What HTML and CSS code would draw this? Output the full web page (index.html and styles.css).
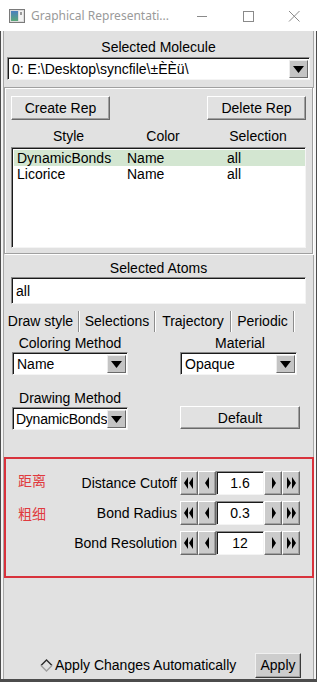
FILE: index.html
```html
<!DOCTYPE html>
<html lang="en">
<head>
    <meta charset="UTF-8">
    <title>Graphical Representations</title>
    <link rel="stylesheet" href="styles.css">
</head>
<body>
<div class="window">
    <div class="titlebar">
        <svg class="app-icon" width="16" height="14" viewBox="0 0 16 14">
            <defs>
                <linearGradient id="ig" x1="0" y1="0" x2="0" y2="1">
                    <stop offset="0" stop-color="#4a7fc0"/>
                    <stop offset="1" stop-color="#5aa878"/>
                </linearGradient>
            </defs>
            <rect x="0.5" y="0.5" width="15" height="13" fill="#dcdcdc" stroke="#7a7a7a"/>
            <rect x="2" y="2" width="7" height="10" fill="url(#ig)"/>
            <rect x="10" y="2" width="4" height="10" fill="#f2f2f2"/>
            <rect x="11" y="3" width="2" height="3" fill="#9a9a9a"/>
        </svg>
        <span class="title">Graphical Representati...</span>
        <div class="winbtns">
            <span class="winbtn"><svg width="12" height="12" viewBox="0 0 12 12"><path d="M1 6.5h10" stroke="#8a8a8a"/></svg></span>
            <span class="winbtn"><svg width="12" height="12" viewBox="0 0 12 12"><rect x="1.5" y="1.5" width="10" height="10" fill="none" stroke="#8a8a8a"/></svg></span>
            <span class="winbtn"><svg width="12" height="12" viewBox="0 0 12 12"><path d="M1 1l10.5 10.5M11.5 1L1 11.5" stroke="#8a8a8a"/></svg></span>
        </div>
    </div>

    <div class="main">
        <div class="caption cap-mol">Selected Molecule</div>
        <div class="combo sunken mol">
            <span class="combo-text">0: E:\Desktop\syncfile\±ÈÈü\</span>
            <span class="arrow-btn"><svg width="11" height="7" viewBox="0 0 11 7"><path d="M0 0h11L5.5 7z" fill="#000"/></svg></span>
        </div>

        <div class="rep-frame">
            <div class="rep-buttons">
                <button class="btn raised">Create Rep</button>
                <button class="btn raised">Delete Rep</button>
            </div>
            <div class="rep-head">
                <span>Style</span>
                <span>Color</span>
                <span>Selection</span>
            </div>
            <div class="listbox sunken">
                <div class="rep-row selected"><span>DynamicBonds</span><span>Name</span><span>all</span></div>
                <div class="rep-row"><span>Licorice</span><span>Name</span><span>all</span></div>
            </div>
        </div>

        <div class="caption cap-atoms">Selected Atoms</div>
        <div class="entry sunken">all</div>

        <div class="tabs">
            <span class="tab tab-draw">Draw style</span>
            <span class="tab tab-sel">Selections</span>
            <span class="tab tab-traj">Trajectory</span>
            <span class="tab tab-per">Periodic</span>
        </div>

        <div class="draw-pane">
            <div class="pane-col">
                <div class="caption">Coloring Method</div>
                <div class="combo sunken small">
                    <span class="combo-text">Name</span>
                    <span class="arrow-btn"><svg width="11" height="7" viewBox="0 0 11 7"><path d="M0 0h11L5.5 7z" fill="#000"/></svg></span>
                </div>
                <div class="caption cap-draw">Drawing Method</div>
                <div class="combo sunken small">
                    <span class="combo-text tight">DynamicBonds</span>
                    <span class="arrow-btn"><svg width="11" height="7" viewBox="0 0 11 7"><path d="M0 0h11L5.5 7z" fill="#000"/></svg></span>
                </div>
            </div>
            <div class="pane-col right">
                <div class="caption">Material</div>
                <div class="combo sunken small">
                    <span class="combo-text">Opaque</span>
                    <span class="arrow-btn"><svg width="11" height="7" viewBox="0 0 11 7"><path d="M0 0h11L5.5 7z" fill="#000"/></svg></span>
                </div>
                <button class="btn raised default-btn">Default</button>
            </div>
        </div>

        <div class="params">
            <div class="cn-labels">
                <span class="cn cn-1">距离</span>
                <span class="cn cn-2">粗细</span>
            </div>
            <div class="param-rows">
                <div class="param-row">
                    <span class="param-label">Distance Cutoff</span>
                    <div class="spin">
                        <span class="spin-btn raised"><svg width="10" height="12" viewBox="0 0 10 12"><path d="M4 0v12L0 6zM9 0v12L5 6z" fill="#000"/></svg></span>
                        <span class="spin-btn raised"><svg width="5" height="12" viewBox="0 0 5 12"><path d="M4 0v12L0 6z" fill="#000"/></svg></span>
                        <span class="spin-value sunken">1.6</span>
                        <span class="spin-btn raised"><svg width="5" height="12" viewBox="0 0 5 12"><path d="M1 0v12L5 6z" fill="#000"/></svg></span>
                        <span class="spin-btn raised"><svg width="10" height="12" viewBox="0 0 10 12"><path d="M1 0v12L5 6zM6 0v12L10 6z" fill="#000"/></svg></span>
                    </div>
                </div>
                <div class="param-row">
                    <span class="param-label">Bond Radius</span>
                    <div class="spin">
                        <span class="spin-btn raised"><svg width="10" height="12" viewBox="0 0 10 12"><path d="M4 0v12L0 6zM9 0v12L5 6z" fill="#000"/></svg></span>
                        <span class="spin-btn raised"><svg width="5" height="12" viewBox="0 0 5 12"><path d="M4 0v12L0 6z" fill="#000"/></svg></span>
                        <span class="spin-value sunken">0.3</span>
                        <span class="spin-btn raised"><svg width="5" height="12" viewBox="0 0 5 12"><path d="M1 0v12L5 6z" fill="#000"/></svg></span>
                        <span class="spin-btn raised"><svg width="10" height="12" viewBox="0 0 10 12"><path d="M1 0v12L5 6zM6 0v12L10 6z" fill="#000"/></svg></span>
                    </div>
                </div>
                <div class="param-row">
                    <span class="param-label">Bond Resolution</span>
                    <div class="spin">
                        <span class="spin-btn raised"><svg width="10" height="12" viewBox="0 0 10 12"><path d="M4 0v12L0 6zM9 0v12L5 6z" fill="#000"/></svg></span>
                        <span class="spin-btn raised"><svg width="5" height="12" viewBox="0 0 5 12"><path d="M4 0v12L0 6z" fill="#000"/></svg></span>
                        <span class="spin-value sunken">12</span>
                        <span class="spin-btn raised"><svg width="5" height="12" viewBox="0 0 5 12"><path d="M1 0v12L5 6z" fill="#000"/></svg></span>
                        <span class="spin-btn raised"><svg width="10" height="12" viewBox="0 0 10 12"><path d="M1 0v12L5 6zM6 0v12L10 6z" fill="#000"/></svg></span>
                    </div>
                </div>
            </div>
        </div>

        <div class="footer">
            <svg class="diamond" width="13" height="13" viewBox="0 0 13 13">
                <path d="M6.5 1L12 6.5 6.5 12 1 6.5z" fill="#e1e1e1"/>
                <path d="M1 6.5L6.5 1 12 6.5" fill="none" stroke="#2a2a2a" stroke-width="1.4"/>
                <path d="M1 6.5L6.5 12 12 6.5" fill="none" stroke="#a0a0a0" stroke-width="1.4"/>
            </svg>
            <span class="auto-label">Apply Changes Automatically</span>
            <button class="btn raised apply-btn">Apply</button>
        </div>
    </div>
</div>
</body>
</html>
```

FILE: styles.css
```css
* { box-sizing: border-box; }
body { margin: 0; font-family: "Liberation Sans", Arial, sans-serif; font-size: 14px; color: #000; }

.window { width: 317px; height: 682px; display: flex; flex-direction: column; background: #e1e1e1; overflow: hidden; }

/* title bar */
.titlebar { height: 31px; flex: none; background: #fff; display: flex; align-items: center; padding-left: 9px; }
.app-icon { flex: none; margin-top: 1px; }
.title { flex: 1; margin-left: 6px; font-family: "Noto Sans", sans-serif; font-size: 12px; color: #9a9a9a; white-space: nowrap; }
.winbtns { display: flex; height: 100%; }
.winbtn { width: 46px; display: flex; align-items: center; justify-content: center; }

/* main pane */
.main { flex: 1; display: flex; flex-direction: column; border: solid #4c4c4c; border-width: 0 1px 3px; box-shadow: inset 2px 0 #f4f4f4, inset 3px 0 #a8a8a8, inset -2px 0 #f4f4f4, inset -3px 0 #a8a8a8; }

.caption { text-align: center; line-height: 16px; white-space: nowrap; }
.cap-mol { margin-top: 8px; }
.cap-atoms { margin-top: 6px; }

.raised { border: 1px solid; border-color: #fff #696969 #696969 #fff; box-shadow: inset -1px -1px #a0a0a0; background: #e1e1e1; }
.sunken { border: 1px solid; border-color: #8a8a8a #f4f4f4 #f4f4f4 #8a8a8a; box-shadow: inset 1px 1px #1a1a1a; background: #fff; }

.btn { font: inherit; color: #000; padding: 0; cursor: pointer; }

/* combo boxes */
.combo { display: flex; align-items: stretch; height: 23px; padding: 2px 1px 1px 2px; }
.combo.mol { margin: 2px 6px 0; }
.combo-text { flex: 1; min-width: 0; line-height: 19px; padding-left: 2px; white-space: nowrap; overflow: hidden; }
.combo-text.tight { letter-spacing: -0.25px; padding-left: 1px; overflow: visible; }
.arrow-btn { width: 19px; flex: none; display: flex; align-items: center; justify-content: center; background: #c4c4c4; border: 1px solid; border-color: #ececec #6a6a6a #6a6a6a #ececec; }

/* representations frame */
.rep-frame { margin: 7px 3px 0; height: 167px; border: 1px solid #a0a0a0; box-shadow: inset 1px 1px #fff, 1px 1px #fff; padding: 8px 6px 0; }
.rep-buttons { display: flex; justify-content: space-between; }
.rep-buttons .btn { width: 99px; height: 24px; }
.rep-head { display: grid; grid-template-columns: 115px 74px 116px; text-align: center; line-height: 16px; margin-top: 8px; }
.listbox { height: 101px; margin-top: 3px; padding: 2px 0 0 2px; }
.rep-row { display: grid; grid-template-columns: 110px 100px 1fr; padding-left: 3px; line-height: 16px; height: 16px; }
.rep-row.selected { background: #d3e6d1; }

.entry { height: 27px; margin: 1px 10px 0; padding: 4px 0 0 4px; line-height: 19px; }

/* tabs */
.tabs { display: flex; height: 21px; margin-top: 7px; padding-left: 2px; }
.tab { line-height: 21px; text-align: center; border-right: 1px solid #8c8c8c; margin-right: 1px; box-shadow: 1px 0 #fff; white-space: nowrap; }
.tab-draw { width: 76px; }
.tab-sel { width: 75px; }
.tab-traj { width: 75px; }
.tab-per { width: 62px; }

.draw-pane { display: flex; justify-content: space-between; padding: 3px 16px 0 11px; }
.pane-col { width: 116px; }
.pane-col.right { width: 120px; }
.pane-col .caption { margin-bottom: 1px; }
.combo.small { width: 116px; }
.pane-col.right .combo.small { width: 117px; }
.cap-draw { margin-top: 15px; }
.default-btn { width: 120px; height: 23px; margin-top: 31px; }

/* parameters box */
.params { margin: 27px 2px 0 3px; height: 121px; border: 2px solid #d8323c; display: flex; padding: 12px 12px 0 12px; }
.cn-labels { display: flex; flex-direction: column; width: 40px; }
.cn { font-family: "Noto Sans CJK SC", sans-serif; font-size: 14px; line-height: 18px; color: #e03a3e; }
.cn-2 { margin-top: 15px; }
.param-rows { flex: 1; display: flex; flex-direction: column; align-items: flex-end; gap: 6px; }
.param-row { display: flex; align-items: center; gap: 3px; height: 24px; }
.param-label { white-space: nowrap; }
.spin { display: flex; height: 24px; }
.spin-btn { width: 18px; height: 24px; display: flex; align-items: center; justify-content: center; background: #cbcbcb; }
.spin-value { width: 48px; height: 24px; text-align: center; line-height: 21px; padding-top: 1px; }

/* footer */
.footer { margin-top: auto; margin-bottom: 1px; display: flex; align-items: center; padding: 0 15px 0 39px; height: 26px; }
.diamond { flex: none; }
.auto-label { margin-left: 2px; flex: 1; white-space: nowrap; }
.apply-btn { width: 46px; height: 25px; background: #cdcdcd; border-color: #f0f0f0 #3a3a3a #3a3a3a #f0f0f0; }
```
